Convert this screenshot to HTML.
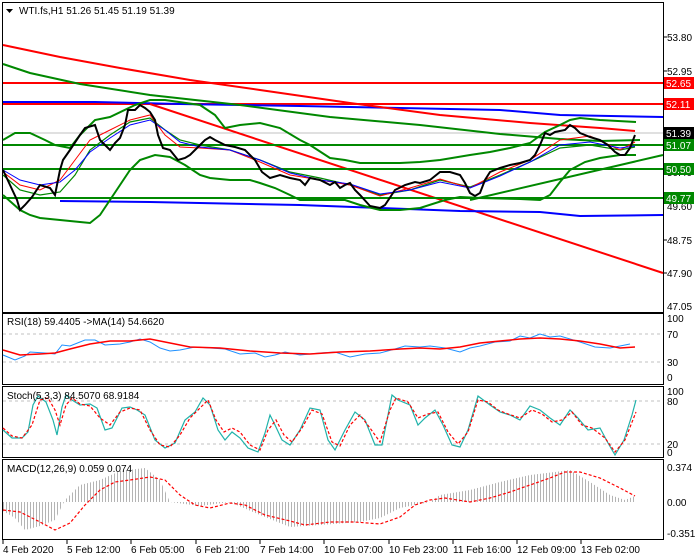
<!DOCTYPE html>
<html><head><meta charset="utf-8"><style>
html,body{margin:0;padding:0;background:#fff}
svg{display:block;font-family:"Liberation Sans",sans-serif;font-size:10px}
</style></head><body>
<svg width="700" height="560" viewBox="0 0 700 560" xmlns="http://www.w3.org/2000/svg">
<defs>
<pattern id="hb" width="3" height="10" patternUnits="userSpaceOnUse"><rect x="0" y="0" width="1" height="10" fill="#b4b4b4"/></pattern>
</defs>
<rect width="700" height="560" fill="#fff"/>
<g fill="none" stroke="#000" stroke-width="1">
<rect x="2.5" y="2.5" width="661" height="310"/>
<rect x="2.5" y="313.5" width="661" height="71"/>
<rect x="2.5" y="386.5" width="661" height="71"/>
<rect x="2.5" y="459.5" width="661" height="80"/>
</g>
<g fill="none" stroke-width="2">
<line x1="3" y1="133" x2="663" y2="133" stroke="#c0c0c0" stroke-width="1"/>
<line x1="3" y1="83" x2="663" y2="83" stroke="#f00"/>
<line x1="3" y1="104" x2="663" y2="104" stroke="#f00"/>
<polyline points="3,102 95,102 180,104 300,106 500,110 560,115 663,117" stroke="#00f"/>
<polyline points="3,45 60,57 120,68 190,80 260,90 350,103 440,115 530,123 600,128 635,131" stroke="#f00"/>
<line x1="150" y1="104" x2="663" y2="273" stroke="#f00"/>
<polyline points="3,64 30,73 80,84 150,95 240,105 330,117 420,125 500,134 560,139 600,141 640,140" stroke="#080"/>
<line x1="3" y1="145" x2="663" y2="145" stroke="#080"/>
<line x1="3" y1="169" x2="663" y2="169" stroke="#080"/>
<line x1="3" y1="198" x2="663" y2="198" stroke="#080"/>
<line x1="470" y1="200" x2="663" y2="155" stroke="#080"/>
<polyline points="60,201 150,202 300,205 380,208 460,211 540,212 580,216 663,215" stroke="#00f"/>
<polyline points="3,140 15,133 30,133 45,140 55,145 70,148 80,135 95,120 110,117 135,105 150,100 165,100 200,105 215,115 225,128 240,125 260,123 280,128 300,140 310,145 330,158 345,160 360,163 400,163 420,162 440,160 470,155 490,152 510,148 530,143 545,132 560,125 570,120 580,118 600,120 636,122" stroke="#080"/>
<polyline points="3,195 20,210 30,215 40,218 60,220 80,222 90,223 100,215 110,200 120,185 130,170 140,160 155,155 170,157 185,165 200,175 210,178 230,180 250,180 260,183 275,188 290,195 300,200 330,200 345,200 360,205 380,210 400,210 420,208 445,200 460,197 480,198 520,199 540,200 550,195 560,182 570,170 585,162 600,158 620,155 636,155" stroke="#080"/>
<polyline points="3,175 20,190 40,195 60,192 75,175 90,150 110,135 130,122 150,118 165,130 180,140 200,145 230,150 260,160 290,172 320,178 350,185 380,195 410,190 440,180 470,187 500,175 530,162 560,148 590,145 620,150 635,147" stroke="#080" stroke-width="1.2"/>
<polyline points="3,172 20,185 40,190 60,180 75,160 90,140 110,130 130,120 150,115 165,135 180,147 200,148 230,150 260,162 290,175 320,180 350,185 380,196 410,188 440,179 470,188 500,172 530,160 560,140 590,136 620,150 635,142" stroke="#f00" stroke-width="1"/>
<polyline points="3,170 20,180 40,185 60,182 75,170 90,152 110,138 130,125 150,120 165,130 180,142 200,147 230,150 260,160 290,173 320,180 350,184 380,194 410,190 440,182 470,188 500,176 530,162 560,145 590,142 620,148 635,146" stroke="#00f" stroke-width="1"/>
<polyline points="3,170 10,185 17,200 20,210 25,205 32,197 40,185 50,188 55,195 60,170 63,160 70,150 80,135 85,128 95,125 100,140 105,145 110,150 115,143 120,138 125,125 128,110 135,110 140,105 145,108 150,112 155,120 158,135 163,148 170,150 178,160 185,158 190,155 195,150 205,140 210,137 215,140 225,145 235,147 245,150 255,160 262,172 270,178 280,175 290,178 300,180 305,185 310,178 320,180 330,185 335,182 340,188 345,185 350,183 355,190 360,195 370,206 380,208 385,205 395,190 405,185 415,182 420,183 430,180 440,172 450,172 460,175 465,183 470,193 475,196 480,193 485,180 490,172 500,168 510,165 520,163 530,160 535,155 540,145 545,133 550,135 555,132 565,130 570,125 575,128 580,133 585,135 590,137 600,140 608,145 615,152 620,155 625,155 630,148 635,135" stroke="#000" stroke-width="2"/>
</g>
<text x="19" y="14" fill="#000">WTI.fs,H1  51.26 51.45 51.19 51.39</text>
<polygon points="6,9 13,9 9.5,13" fill="#000"/>
<g fill="#000">
<text x="667" y="41">53.80</text><text x="667" y="75">52.95</text><text x="667" y="109">52.10</text>
<text x="667" y="176">50.40</text><text x="667" y="210">49.60</text><text x="667" y="244">48.75</text>
<text x="667" y="277">47.90</text><text x="667" y="310">47.05</text>
</g>
<g stroke="#000"><line x1="663" y1="37" x2="667" y2="37"/><line x1="663" y1="71" x2="667" y2="71"/><line x1="663" y1="273" x2="667" y2="273"/><line x1="663" y1="240" x2="667" y2="240"/></g>
<rect x="664" y="77" width="30" height="12" fill="#f00"/><text x="666" y="87" fill="#fff">52.65</text>
<rect x="664" y="98" width="30" height="12" fill="#f00"/><text x="666" y="108" fill="#fff">52.11</text>
<rect x="664" y="127" width="30" height="12" fill="#000"/><text x="666" y="137" fill="#fff">51.39</text>
<rect x="664" y="139" width="30" height="12" fill="#080"/><text x="666" y="149" fill="#fff">51.07</text>
<rect x="664" y="163" width="30" height="12" fill="#080"/><text x="666" y="173" fill="#fff">50.50</text>
<rect x="664" y="192" width="30" height="12" fill="#080"/><text x="666" y="202" fill="#fff">49.77</text>
<g stroke="#c0c0c0" stroke-dasharray="3,3"><line x1="3" y1="334" x2="663" y2="334"/><line x1="3" y1="362" x2="663" y2="362"/><line x1="3" y1="401" x2="663" y2="401"/><line x1="3" y1="444" x2="663" y2="444"/></g>
<polyline fill="none" stroke="#1e90ff" points="3,355 15,360 25,356 30,352 45,353 55,354 62,345 70,346 80,342 85,340 95,340 105,345 120,344 130,342 140,339 150,342 160,348 170,351 180,350 195,347 210,348 225,349 240,354 255,353 265,357 275,355 285,352 300,355 320,353 335,352 350,357 365,354 380,353 395,349 405,346 420,347 430,346 445,348 460,352 470,348 480,346 495,342 510,341 520,336 530,338 540,334 550,337 560,336 570,339 580,342 595,347 610,348 620,346 630,344" stroke-width="1"/>
<polyline fill="none" stroke="#f00" stroke-width="1.5" points="3,350 20,355 40,354 55,353 70,349 90,344 110,341 130,341 150,339 170,343 190,347 220,348 250,351 280,353 310,354 340,352 370,351 400,349 420,348 440,349 460,347 480,343 500,341 520,339 540,338 560,339 580,341 600,344 620,348 635,347"/>
<text x="7" y="325">RSI(18) 59.4405  -&gt;MA(14) 54.6620</text>
<g fill="#000"><text x="667" y="322">100</text><text x="667" y="338">70</text><text x="667" y="366">30</text><text x="667" y="381">0</text></g>
<polyline fill="none" stroke="#20b2aa" stroke-width="1.2" points="3,430 12,438 22,438 28,432 33,405 38,396 46,402 53,420 57,435 62,407 66,395 72,400 80,405 90,404 97,408 105,430 112,428 122,408 130,407 137,410 145,415 155,440 165,448 175,443 185,420 195,412 203,398 210,405 218,430 225,440 232,432 240,438 248,448 258,452 265,433 270,415 275,425 282,440 290,445 300,430 310,408 320,410 328,440 335,450 345,430 355,412 365,420 375,445 382,445 392,395 398,400 410,405 418,425 425,418 435,410 443,425 452,445 460,447 468,430 478,396 490,405 500,412 510,415 520,420 530,406 540,410 550,418 560,425 570,410 578,418 588,430 600,428 608,443 615,455 624,440 632,415 636,400"/>
<polyline fill="none" stroke="#f00" stroke-width="1.2" stroke-dasharray="3,2" points="3,428 12,436 22,438 32,425 40,400 48,398 55,410 60,425 66,405 72,398 80,404 90,406 100,418 110,425 120,412 130,408 140,410 150,430 160,445 170,447 180,435 190,418 200,408 208,400 216,420 224,432 232,428 240,432 250,445 260,450 268,430 276,420 284,435 292,442 302,428 312,410 322,414 332,442 340,446 350,425 360,415 370,428 380,442 390,410 396,398 408,402 418,418 428,414 438,412 448,432 458,444 468,432 478,400 488,402 498,410 508,414 520,418 532,410 542,414 552,422 562,420 572,412 582,425 592,428 605,438 615,452 625,440 636,412"/>
<text x="7" y="399">Stoch(5,3,3) 84.5070 68.9184</text>
<g fill="#000"><text x="667" y="395">100</text><text x="667" y="405">80</text><text x="667" y="448">20</text><text x="667" y="456">0</text></g>
<polygon fill="url(#hb)" points="3,502 3,511 15,518 25,530 40,526 55,520 65,500 80,485 100,480 120,471 145,468 160,480 170,502 200,506 230,502 260,515 290,527 320,525 360,522 380,518 400,508 430,502 440,495 470,490 500,482 530,475 555,472 570,470 590,482 610,495 625,500 635,496 635,502"/>
<polyline fill="none" stroke="#f00" stroke-width="1.2" stroke-dasharray="3,2" points="3,510 20,512 40,522 55,530 70,523 85,505 100,490 115,482 130,480 150,477 165,480 180,495 195,505 210,508 230,503 245,505 265,515 290,521 305,525 330,522 355,522 380,524 400,517 415,505 430,500 445,498 470,502 490,498 510,492 530,485 550,478 565,472 580,472 600,478 620,488 635,496"/>
<text x="7" y="472">MACD(12,26,9) 0.059 0.074</text>
<g fill="#000"><text x="667" y="471">0.374</text><text x="667" y="506">0.00</text><text x="667" y="537">-0.351</text></g>
<g stroke="#000"><line x1="3" y1="540" x2="3" y2="544"/><line x1="67" y1="540" x2="67" y2="544"/><line x1="131" y1="540" x2="131" y2="544"/><line x1="196" y1="540" x2="196" y2="544"/><line x1="260" y1="540" x2="260" y2="544"/><line x1="324" y1="540" x2="324" y2="544"/><line x1="389" y1="540" x2="389" y2="544"/><line x1="453" y1="540" x2="453" y2="544"/><line x1="517" y1="540" x2="517" y2="544"/><line x1="581" y1="540" x2="581" y2="544"/></g>
<g fill="#000">
<text x="3" y="553">4 Feb 2020</text><text x="67" y="553">5 Feb 12:00</text><text x="131" y="553">6 Feb 05:00</text>
<text x="196" y="553">6 Feb 21:00</text><text x="260" y="553">7 Feb 14:00</text><text x="324" y="553">10 Feb 07:00</text>
<text x="389" y="553">10 Feb 23:00</text><text x="453" y="553">11 Feb 16:00</text><text x="517" y="553">12 Feb 09:00</text>
<text x="581" y="553">13 Feb 02:00</text>
</g>
</svg>
</body></html>
